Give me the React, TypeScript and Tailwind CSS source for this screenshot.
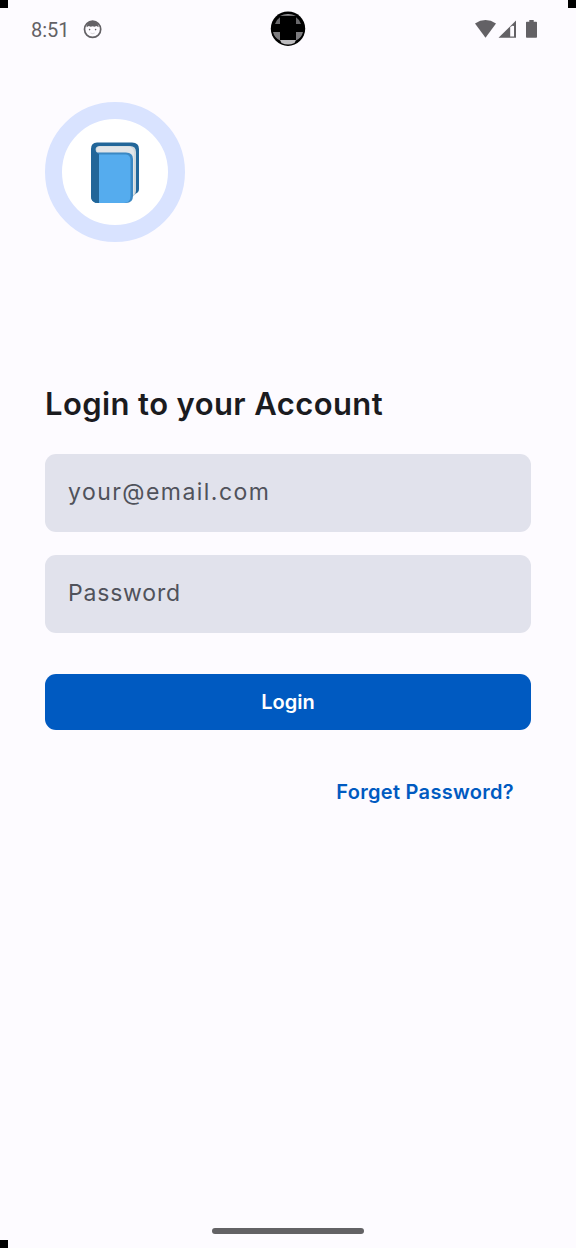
import React from "react";

function StatusBar() {
  return (
    <header className="relative flex h-[58px] items-center justify-between pr-[38px] pl-[31px] text-[#636165]">
      <div className="flex items-center">
        <span className="w-[52px] pt-px font-[Roboto,sans-serif] text-[20px] leading-6 whitespace-nowrap">8:51</span>
        <svg className="h-5 w-5" viewBox="0 0 20 20" fill="none">
          <circle cx="9.6" cy="10.3" r="8.1" stroke="currentColor" strokeWidth="1.7" />
          <path d="M3.5 8.2C4 4 6.2 2.6 9.6 2.6S15.2 4 15.7 8.2L13.4 7 11.5 7.8 9.6 7.2 7.7 7.8 5.8 7Z" fill="currentColor" />
          <circle cx="6.6" cy="10.6" r=".8" fill="currentColor" />
          <circle cx="12.6" cy="10.6" r=".8" fill="currentColor" />
          <path d="M7.5 14q2.1 1.3 4.2 0" stroke="currentColor" strokeWidth=".6" opacity=".4" />
        </svg>
      </div>
      <svg className="h-5 w-[64px]" viewBox="0 0 64 20" fill="currentColor">
        <path d="M1 4.5Q11.5-2.3 22 4.5L11.5 18.8Z" />
        <path fillRule="evenodd" d="M24.5 18.8 42 1.5V18.8ZM36.2 7.9V17.4H40V7L38.5 6.8Z" />
        <path d="M52 3.4Q52 2.7 52.8 2.7H55.3V.9H59.7V2.7H62.2Q63 2.7 63 3.4V18Q63 18.8 62.2 18.8H52.8Q52 18.8 52 18Z" />
      </svg>
      <svg className="absolute top-[11px] left-[270px] h-9 w-9" viewBox="0 0 36 36">
        <circle cx="18" cy="17.7" r="17.2" fill="#000" />
        <path d="M10 4.7Q18 1.2 26 4.7Z" fill="#9b9a9d" />
        <path d="M5 13Q6.5 8.5 10 6.3V13ZM26 6.3Q29.5 8.5 31 13H26Z" fill="#69686b" />
        <path d="M3 21H10V29.5Q4.4 27 3 21ZM26 21H33Q31.6 27 26 29.5Z" fill="#7c7b7e" />
        <path d="M10 29H26L24.5 32Q18 35 11.5 32Z" fill="#bdbcbf" />
      </svg>
    </header>
  );
}

function Logo() {
  return (
    <div className="mt-11 flex h-[140px] w-[140px] items-center justify-center rounded-full border-[17px] border-[#d9e3ff] bg-white">
      <svg className="mt-[2px] h-[62px] w-[50px]" viewBox="0 0 50 62">
        <path d="M7 .5H42Q49 .5 49 7V47Q49 50 46 51.5L35 61H8Q1 61 1 54V7Q1 .5 7 .5Z" fill="#226699" />
        <path d="M9 4H40Q46 4 46 10V49Q46 52 43.5 54L39 58V14L9 12Q5.5 11.5 5.5 8T9 4Z" fill="#cfd8dc" />
        <path d="M10 4.5H38Q44 5 44 11V52L41 54V17Q40 10.5 34 10.5H9Q6.5 10 6.5 7.5T10 4.5Z" fill="#e1e5e8" />
        <path d="M5 10.4H36Q43 10.4 43 17V54Q43 61 36 61H5Z" fill="#3b88c3" />
        <path d="M9 12.5H36Q40.5 13 40.5 18V54Q40.5 61 34 61H9Z" fill="#55acee" />
        <path d="M1 7H5Q6 11 9 12V61H8Q1 61 1 54Z" fill="#226699" />
      </svg>
    </div>
  );
}

export default function App() {
  return (
    <div className="relative flex h-[1248px] w-[576px] flex-col overflow-hidden bg-[#fdfbff] font-[Inter,sans-serif]">
      <StatusBar />
      <main className="flex flex-1 flex-col px-[45px]">
        <Logo />
        <h1 className="mt-[142px] h-10 text-[31px] leading-10 font-semibold tracking-[0.4px] whitespace-nowrap text-[#1b1b1f]">
          Login to your Account
        </h1>
        <form className="mt-[30px] flex flex-col" onSubmit={(e) => e.preventDefault()}>
          <input
            type="email"
            placeholder="your@email.com"
            className="h-[78px] rounded-[11px] bg-[#e1e2ec] px-[23px] pb-[2px] text-[23px] tracking-[1.45px] text-[#44464f] outline-none placeholder:text-[#50525b]"
          />
          <input
            type="password"
            placeholder="Password"
            className="mt-[23px] h-[78px] rounded-[11px] bg-[#e1e2ec] px-[23px] pb-[2px] text-[23px] tracking-[0.8px] text-[#44464f] outline-none placeholder:text-[#50525b]"
          />
          <button type="submit" className="mt-[41px] h-14 rounded-[11px] bg-[#005ac1] text-[20px] font-semibold text-white">
            Login
          </button>
          <button type="button" className="mt-[42px] mr-[17px] h-10 self-end text-[20px] font-semibold tracking-[0.3px] whitespace-nowrap text-[#005ac1]">
            Forget Password?
          </button>
        </form>
      </main>
      <div className="mb-[14px] h-[6px] w-[152px] self-center rounded-full bg-[#636265]" />
      <div className="absolute top-0 left-0 h-2 w-2 bg-black" />
      <div className="absolute top-0 right-0 h-2 w-2 bg-black" />
      <div className="absolute bottom-0 left-0 h-2 w-2 bg-black" />
    </div>
  );
}
